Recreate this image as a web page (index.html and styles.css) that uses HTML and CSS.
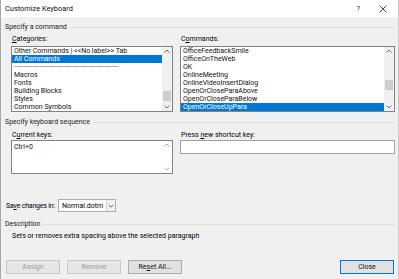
FILE: index.html
```html
<!DOCTYPE html>
<html>
<head>
<meta charset="utf-8">
<link rel="stylesheet" href="styles.css">
</head>
<body>
<div class="window">
  <div class="titlebar">
    <span class="title">Customize Keyboard</span>
    <span class="help">?</span>
    <svg class="close-x" width="8" height="8" viewBox="0 0 8 8"><path d="M0.5 0.5L7.5 7.5M7.5 0.5L0.5 7.5" stroke="#333" stroke-width="0.9" fill="none"/></svg>
  </div>
  <div class="body">
    <div class="group-head"><span>Specify a command</span><div class="rule"></div></div>
    <div class="pair">
      <div class="col left">
        <div class="label"><span><u>C</u>ategories:</span></div>
        <div class="listbox">
          <div class="items">
            <div class="item">Other Commands | &lt;&lt;No label&gt;&gt; Tab</div>
            <div class="item sel">All Commands</div>
            <div class="item dash">----------------------------------------------</div>
            <div class="item">Macros</div>
            <div class="item">Fonts</div>
            <div class="item">Building Blocks</div>
            <div class="item">Styles</div>
            <div class="item">Common Symbols</div>
          </div>
          <div class="vscroll">
            <svg class="arrow" width="10" height="9" viewBox="0 0 10 9"><path d="M2.5 5.5L5 3L7.5 5.5" stroke="#606060" stroke-width="0.9" fill="none"/></svg>
            <div class="track"><div class="thumb cat-thumb"></div></div>
            <svg class="arrow" width="10" height="9" viewBox="0 0 10 9"><path d="M2.5 3.5L5 6L7.5 3.5" stroke="#606060" stroke-width="0.9" fill="none"/></svg>
          </div>
        </div>
      </div>
      <div class="col right">
        <div class="label"><span>C<u>o</u>mmands:</span></div>
        <div class="listbox">
          <div class="items">
            <div class="item">OfficeFeedbackSmile</div>
            <div class="item">OfficeOnTheWeb</div>
            <div class="item">OK</div>
            <div class="item">OnlineMeeting</div>
            <div class="item">OnlineVideoInsertDialog</div>
            <div class="item">OpenOrCloseParaAbove</div>
            <div class="item">OpenOrCloseParaBelow</div>
            <div class="item sel">OpenOrCloseUpPara</div>
          </div>
          <div class="vscroll">
            <svg class="arrow" width="10" height="9" viewBox="0 0 10 9"><path d="M2.5 5.5L5 3L7.5 5.5" stroke="#606060" stroke-width="0.9" fill="none"/></svg>
            <div class="track"><div class="thumb cmd-thumb"></div></div>
            <svg class="arrow" width="10" height="9" viewBox="0 0 10 9"><path d="M2.5 3.5L5 6L7.5 3.5" stroke="#606060" stroke-width="0.9" fill="none"/></svg>
          </div>
        </div>
      </div>
    </div>

    <div class="group-head g2"><span>Specify keyboard sequence</span><div class="rule"></div></div>
    <div class="pair">
      <div class="col left">
        <div class="label l2"><span>C<u>u</u>rrent keys:</span></div>
        <div class="keybox">
          <div class="items"><div class="item">Ctrl+0</div></div>
          <div class="vscroll">
            <svg class="arrow" width="10" height="9" viewBox="0 0 10 9"><path d="M2.5 5.5L5 3L7.5 5.5" stroke="#a0a0a0" stroke-width="0.9" fill="none"/></svg>
            <div class="track"></div>
            <svg class="arrow" width="10" height="9" viewBox="0 0 10 9"><path d="M2.5 3.5L5 6L7.5 3.5" stroke="#a0a0a0" stroke-width="0.9" fill="none"/></svg>
          </div>
        </div>
      </div>
      <div class="col right">
        <div class="label l2"><span>Press <u>n</u>ew shortcut key:</span></div>
        <div class="textbox"></div>
      </div>
    </div>

    <div class="save-row">
      <span class="save-label">Sa<u>v</u>e changes in:</span>
      <div class="combo">
        <span class="combo-text">Normal.dotm</span>
        <div class="combo-btn">
          <svg width="8" height="8" viewBox="0 0 8 8"><path d="M1.8 3L4 5.2L6.2 3" stroke="#505050" stroke-width="0.9" fill="none"/></svg>
        </div>
      </div>
    </div>

    <div class="group-head g3"><span>Description</span><div class="rule"></div></div>
    <div class="desc">Sets or removes extra spacing above the selected paragraph</div>

    <div class="buttons">
      <div class="btn disabled">Assign</div>
      <div class="btn disabled">Remove</div>
      <div class="btn"><span>Re<u>s</u>et All...</span></div>
      <div class="spacer"></div>
      <div class="btn default">Close</div>
    </div>
  </div>
</div>
</body>
</html>
```

FILE: styles.css
```css
* { box-sizing: border-box; }
html, body { margin: 0; padding: 0; }
body {
  width: 399px;
  height: 279px;
  overflow: hidden;
  font-family: Roboto, "Noto Sans", sans-serif;
  font-size: 7px;
  color: #000;
  background: #f0f0f0;
}
.window {
  width: 399px;
  height: 279px;
  display: flex;
  flex-direction: column;
  border-left: 1px solid #a8a8a8;
  border-right: 1px solid #c8c8c8;
}
.titlebar {
  height: 17px;
  background: #ffffff;
  display: flex;
  align-items: center;
  padding-left: 4px;
  flex: none;
}
.title {
  font-size: 7.4px;
  color: #111;
  flex: 1;
}
.help {
  font-size: 7.5px;
  color: #333;
  margin-right: 19px;
}
.close-x {
  margin-right: 11px;
}
.body {
  flex: 1;
  padding: 5px 3px 0 4px;
  display: flex;
  flex-direction: column;
}
.group-head {
  height: 10px;
  display: flex;
  align-items: center;
  gap: 3px;
  color: #222;
  white-space: nowrap;
}
.group-head .rule {
  flex: 1;
  height: 1px;
  background: #dcdcdc;
}
.g2 { margin-top: 5px; }
.pair {
  display: flex;
  gap: 7px;
  padding-left: 6px;
}
.col { display: flex; flex-direction: column; }
.col.left { width: 162px; }
.col.right { flex: 1; }
.label {
  height: 12px;
  display: flex;
  align-items: center;
  padding-top: 2px;
  padding-left: 1px;
  white-space: nowrap;
}
.label.l2 { height: 13px; padding-top: 3px; }
.listbox {
  height: 66px;
  border: 1px solid #828282;
  background: #fff;
  display: flex;
  margin-top: 2px;
}
.items {
  flex: 1;
  display: flex;
  flex-direction: column;
  min-width: 0;
}
.item {
  height: 8.1px;
  line-height: 8.1px;
  padding-left: 2px;
  white-space: nowrap;
  overflow: hidden;
  color: #111;
}
.item.sel {
  background: #0078d7;
  color: #fff;
}
.item.dash { letter-spacing: 0.35px; color: #444; }
.vscroll {
  width: 10px;
  background: #f0f0f0;
  display: flex;
  flex-direction: column;
}
.vscroll .arrow { flex: none; }
.track { flex: 1; display: flex; flex-direction: column; }
.thumb {
  background: #cdcdcd;
  height: 10px;
  margin: 0 1px;
}
.cat-thumb { margin-top: auto; margin-bottom: 1px; }
.cmd-thumb { margin-top: 24px; }
.keybox {
  height: 34px;
  border: 1px solid #828282;
  background: #fff;
  display: flex;
}
.keybox .vscroll { background: #fff; }
.keybox .items { padding-top: 2px; }
.textbox {
  height: 14px;
  border: 1px solid #a0a0a0;
  background: #fff;
}
.save-row {
  display: flex;
  align-items: center;
  margin-top: 25px;
  height: 13px;
  padding-left: 1px;
}
.save-label { flex: none; white-space: nowrap; margin-right: 3px; letter-spacing: -0.2px; }
.combo {
  width: 58px;
  height: 13px;
  border: 1px solid #adadad;
  background: #fff;
  display: flex;
  align-items: center;
  flex: none;
}
.combo-text { flex: 1; padding-left: 3px; white-space: nowrap; }
.combo-btn {
  width: 9px;
  height: 11px;
  background: #f0f0f0;
  border-left: 1px solid #d0d0d0;
  display: flex;
  align-items: center;
  justify-content: center;
}
.g3 { margin-top: 7px; }
.desc {
  padding-left: 7px;
  height: 12px;
  display: flex;
  align-items: center;
  margin-top: 1px;
  white-space: nowrap;
}
.buttons {
  display: flex;
  gap: 7px;
  margin-top: 18px;
  padding-left: 1px;
  padding-right: 1px;
}
.btn {
  width: 54px;
  height: 14px;
  border: 1px solid #adadad;
  background: #e1e1e1;
  display: flex;
  align-items: center;
  justify-content: center;
  color: #111;
  white-space: nowrap;
}
.btn.disabled {
  color: #9a9a9a;
  border-color: #c8c8c8;
  background: #e6e6e6;
}
.btn.default {
  border: 1px solid #0078d7;
}
.spacer { flex: 1; }
u { text-decoration-thickness: 0.5px; text-underline-offset: 1px; }
```
